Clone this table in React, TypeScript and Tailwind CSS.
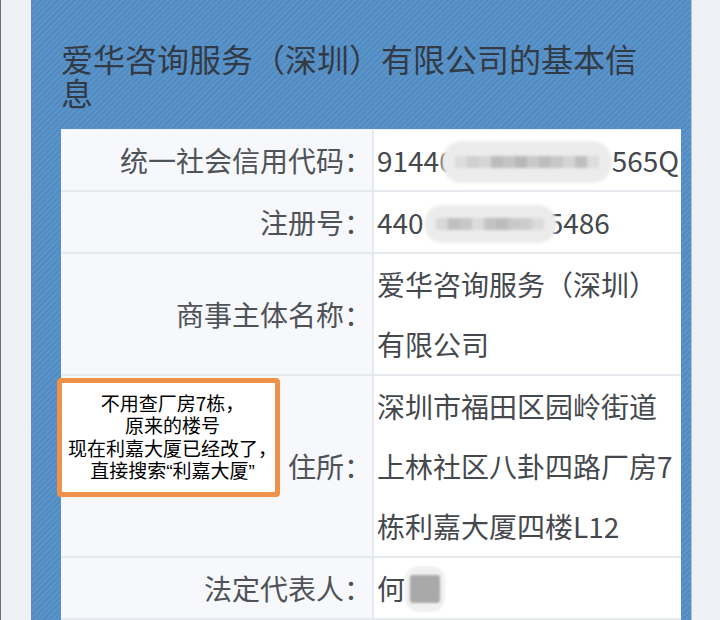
const rowCls = 'flex border-b-2 border-[#e6eaef]';
const labelCls =
  'w-[313px] shrink-0 flex items-center justify-end bg-[#f6f8fc] border-r-2 border-[#e6eaef] text-[#4f5358]';
const valueCls = 'flex-1 pl-[3px] pr-[2px] bg-white text-[#45494e]';

/** Pixelated blur blob used to hide numbers. */
function Blob({ size }: { size: 'credit' | 'reg' | 'name' }) {
  if (size === 'name') {
    return (
      <span className="relative inline-flex items-center justify-center align-middle w-[40px] h-[46px] -mt-[6px] rounded-[14px] bg-[#f0f0f0] blur-[1px]">
        <span className="w-[30px] h-[28px] bg-[#a9a9a9] rounded-[3px]" />
      </span>
    );
  }
  const cells =
    size === 'credit'
      ? ['#dcdcdc', '#cfcfcf', '#d6d6d6', '#bcbcbc', '#c4c4c4', '#b8b8b8', '#c9c9c9', '#bdbdbd', '#c7c7c7', '#d4d4d4', '#bebebe', '#dcdcdc']
      : ['#d8d8d8', '#c0c0c0', '#c6c6c6', '#dcdcdc', '#c3c3c3', '#bcbcbc', '#c9c9c9', '#cdcdcd', '#dadada'];
  return (
    <span
      className={
        size === 'credit'
          ? 'relative z-10 inline-flex items-center justify-center align-middle w-[170px] h-[42px] -ml-[13px] -mt-[4px] rounded-[20px] bg-[#ececec] blur-[1.5px]'
          : 'relative z-10 inline-flex items-center justify-center align-middle w-[133px] h-[38px] -mr-[9px] -mt-[4px] rounded-[19px] bg-[#ececec] blur-[1.5px]'
      }
    >
      {cells.map((c, i) => (
        <span key={i} className="w-[12px] h-[12px]" style={{ backgroundColor: c }} />
      ))}
    </span>
  );
}

export default function App() {
  return (
    <div className="relative w-[720px] h-[620px] overflow-hidden flex bg-[#eef2f6] font-['Noto_Sans_CJK_SC',sans-serif]">
      <div className="w-[31px] shrink-0 border-l border-[#6e6e6e]" />

      {/* Blue striped panel */}
      <div className="w-[661px] shrink-0 pt-[41px] pl-[30px] border-r border-[#a9c8e8] bg-[repeating-linear-gradient(135deg,#5b94ca_0px,#5b94ca_2px,#528bc0_2px,#528bc0_4px)]">
        <h1 className="w-[600px] text-[32px] leading-[34px] text-[#323a45]">
          爱华咨询服务（深圳）有限公司的基本信息
        </h1>

        <div className="mt-[20px] w-[620px] text-[28px] leading-[60px] border-t border-[#eef3f9]">
          <div className={rowCls}>
            <div className={labelCls}>统一社会信用代码：</div>
            <div className={valueCls + ' whitespace-nowrap'}>
              91440
              <Blob size="credit" />
              565Q
            </div>
          </div>
          <div className={rowCls}>
            <div className={labelCls}>注册号：</div>
            <div className={valueCls + ' whitespace-nowrap'}>
              440
              <Blob size="reg" />
              5486
            </div>
          </div>
          <div className={rowCls}>
            <div className={labelCls}>商事主体名称：</div>
            <div className={valueCls}>爱华咨询服务（深圳）有限公司</div>
          </div>
          <div className={rowCls}>
            <div className={labelCls}>住所：</div>
            <div className={valueCls}>深圳市福田区园岭街道上林社区八卦四路厂房7栋利嘉大厦四楼L12</div>
          </div>
          <div className={rowCls}>
            <div className={labelCls}>法定代表人：</div>
            <div className={valueCls + ' whitespace-nowrap'}>
              何
              <Blob size="name" />
            </div>
          </div>
        </div>
      </div>

      {/* Hand-written annotation over the address row */}
      <div className="absolute left-[57px] top-[378px] w-[223px] h-[119px] flex flex-col items-center justify-center pl-[8px] border-[5px] border-[#ef9149] rounded-[4px] bg-white text-black text-[19px] leading-[22.5px] text-center whitespace-nowrap">
        <div>不用查厂房7栋，</div>
        <div>原来的楼号</div>
        <div>现在利嘉大厦已经改了，</div>
        <div>
          直接搜索<span className="font-['Liberation_Sans',sans-serif]">“</span>利嘉大厦
          <span className="font-['Liberation_Sans',sans-serif]">”</span>
        </div>
      </div>
    </div>
  );
}
